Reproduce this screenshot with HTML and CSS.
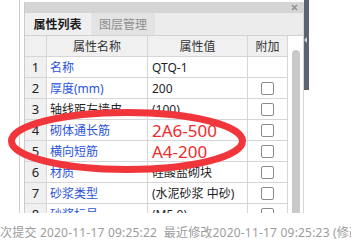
FILE: index.html
```html
<!DOCTYPE html>
<html>
<head>
<meta charset="utf-8">
<link rel="stylesheet" href="styles.css">
</head>
<body>
<div class="screen">
  <div class="main">
    <div class="side"></div>
    <div class="panel">
      <div class="titlebar">
        <svg class="close" width="7" height="7" viewBox="0 0 7 7"><path d="M1 1L6 6M6 1L1 6" stroke="#8c8c8c" stroke-width="1.4"/></svg>
      </div>
      <div class="tabs">
        <div class="tab active">属性列表</div>
        <div class="tab">图层管理</div>
      </div>
      <div class="body">
        <div class="grid">
          <div class="row head"><div class="c idx"></div><div class="c name">属性名称</div><div class="c val">属性值</div><div class="c add">附加</div></div>
          <div class="row"><div class="c idx">1</div><div class="c name">名称</div><div class="c val">QTQ-1</div><div class="c add"></div></div>
          <div class="row"><div class="c idx">2</div><div class="c name">厚度(mm)</div><div class="c val">200</div><div class="c add"><span class="cb"></span></div></div>
          <div class="row"><div class="c idx">3</div><div class="c name plain">轴线距左墙皮</div><div class="c val">(100)</div><div class="c add"><span class="cb"></span></div></div>
          <div class="row"><div class="c idx">4</div><div class="c name">砌体通长筋</div><div class="c val big">2A6-500</div><div class="c add"><span class="cb"></span></div></div>
          <div class="row"><div class="c idx">5</div><div class="c name">横向短筋</div><div class="c val big">A4-200</div><div class="c add"><span class="cb"></span></div></div>
          <div class="row"><div class="c idx">6</div><div class="c name">材质</div><div class="c val">硅酸盐砌块</div><div class="c add"><span class="cb"></span></div></div>
          <div class="row"><div class="c idx">7</div><div class="c name">砂浆类型</div><div class="c val">(水泥砂浆 中砂)</div><div class="c add"><span class="cb"></span></div></div>
          <div class="row"><div class="c idx">8</div><div class="c name">砂浆标号</div><div class="c val">(M5.0)</div><div class="c add"><span class="cb"></span></div></div>
        </div>
        <div class="scroll"><div class="thumb"></div></div>
      </div>
    </div>
    <div class="splitter"><span class="notch"></span></div>
  </div>
  <div class="status">次提交 2020-11-17 09:25:22&nbsp;&nbsp;最近修改2020-11-17 09:25:23 (修改人：管理员)</div>
  <svg class="mark" width="351" height="241" viewBox="0 0 351 241">
    <ellipse cx="127" cy="141" rx="115.5" ry="28.5" fill="none" stroke="#f0353b" stroke-width="7"/>
  </svg>
</div>
</body>
</html>
```
FILE: styles.css
```css
* { box-sizing: border-box; }
html, body { margin: 0; padding: 0; background: #fff; }
body {
  width: 351px;
  height: 241px;
  overflow: hidden;
  font-family: "Noto Sans", "Noto Sans CJK SC", sans-serif;
  font-size: 12px;
  color: #1e1e1e;
}
.screen { position: relative; width: 351px; height: 241px; overflow: hidden; }
.main { display: flex; align-items: flex-start; height: 213px; overflow: hidden; }
.side { width: 20px; height: 213px; border-right: 1px solid #cdcdcd; flex: none; }
.panel {
  margin-left: 4px;
  margin-top: 2px;
  width: 280px;
  height: 211px;
  flex: none;
  border-left: 1px solid #cbcbcb;
  border-right: 1px solid #d6d6d6;
  display: flex;
  flex-direction: column;
  overflow: hidden;
}
.titlebar {
  height: 11px;
  background: #d5d5d5;
  display: flex;
  justify-content: flex-end;
  align-items: center;
  padding-right: 5px;
  flex: none;
}
.tabs {
  height: 23px;
  background: #ececec;
  border-bottom: 1px solid #d2d2d2;
  display: flex;
  flex: none;
}
.tab {
  width: 65px;
  display: flex;
  align-items: center;
  justify-content: center;
  color: #8e8e8e;
  font-size: 12px;
  background: #e3e3e3;
  border-left: 1px solid #f4f4f4;
}
.tab.active {
  background: #efefef;
  color: #1c1c1c;
  font-weight: 700;
  border-left: none;
}
.body { display: flex; flex: 1; min-height: 0; }
.grid { width: 263px; flex: none; }
.row { display: flex; height: 21px; }
.c {
  height: 21px;
  border-right: 1px solid #d6d6d6;
  border-bottom: 1px solid #d6d6d6;
  display: flex;
  align-items: center;
  white-space: nowrap;
  overflow: hidden;
}
.idx { width: 22px; background: #f0f0f0; justify-content: center; font-size: 13px; color: #222; }
.name { width: 101px; padding-left: 3px; color: #2a53dc; }
.name.plain { color: #1e1e1e; }
.val { width: 100px; padding-left: 4px; color: #1e1e1e; }
.val.big { color: #ee2c2c; font-size: 17px; padding-left: 4px; }
.add { width: 40px; justify-content: center; }
.head .c { background: #f0f0f0; justify-content: center; color: #333; padding: 0; }
.cb {
  width: 13px;
  height: 13px;
  border: 1px solid #8a8a8a;
  border-radius: 2px;
  background: #fff;
}
.scroll { width: 15px; flex: none; display: flex; justify-content: center; padding-top: 14px; }
.thumb { width: 8px; height: 200px; background: #c9c9c9; border-radius: 4px; }
.splitter { width: 5px; height: 90px; background: #5c646e; flex: none; position: relative; }
.notch {
  position: absolute;
  left: 0;
  top: 37px;
  width: 0;
  height: 0;
  border-top: 3px solid transparent;
  border-bottom: 3px solid transparent;
  border-right: 3px solid #c9ced4;
}
.status {
  height: 28px;
  padding-top: 12px;
  color: #9c9c9c;
  font-size: 12px;
  letter-spacing: 0.2px;
  white-space: nowrap;
  overflow: hidden;
  line-height: 16px;
}
.mark { position: absolute; left: 0; top: 0; pointer-events: none; }
```
